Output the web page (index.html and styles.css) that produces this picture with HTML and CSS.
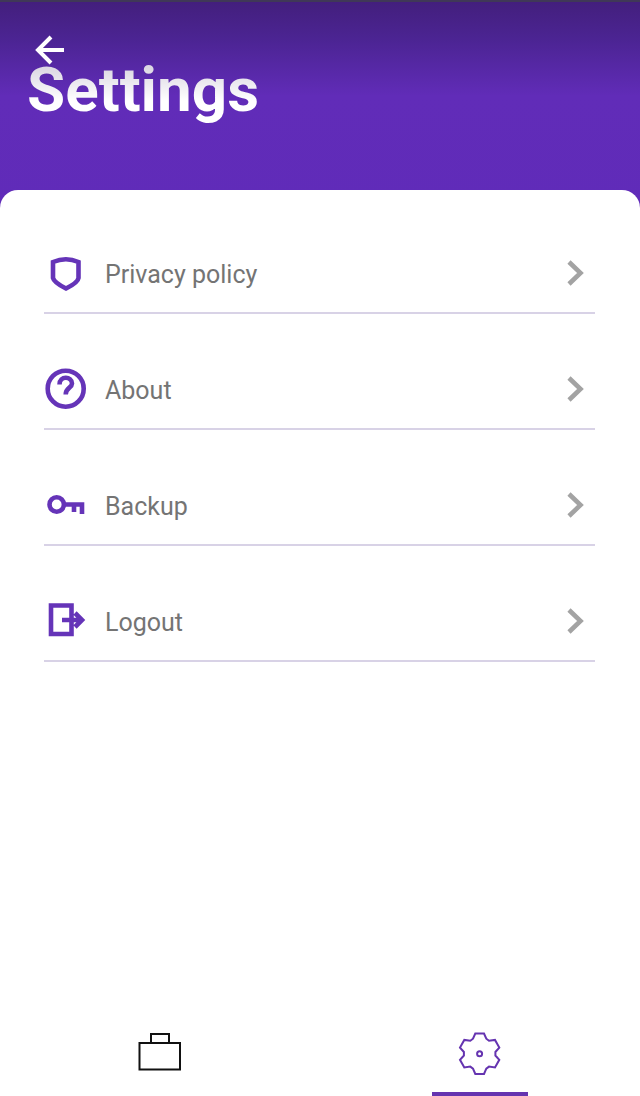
FILE: index.html
```html
<!DOCTYPE html>
<html lang="en">
<head>
<meta charset="utf-8">
<meta name="viewport" content="width=device-width, initial-scale=1">
<title>Settings</title>
<link rel="stylesheet" href="styles.css">
</head>
<body>
<header class="header">
  <button class="back" type="button" aria-label="Back">
    <svg class="back-icon" viewBox="0 0 32 32"><path d="M30 16H4M17 3L4 16l13 13"/></svg>
  </button>
  <h1 class="title">Settings</h1>
</header>
<main class="panel">
  <ul class="list">
    <li><a class="row" href="#privacy">
      <svg class="icon" viewBox="0 0 44 44"><path d="M9 11Q22 5.500 34.500 11V27Q34 31.500 22 37.500Q10 31.500 9 27Z"/></svg>
      <span class="label">Privacy policy</span>
      <svg class="chevron" viewBox="0 0 20 32"><path d="M3 5l11.500 11L3 27"/></svg>
    </a></li>
    <li><a class="row" href="#about">
      <svg class="icon" viewBox="0 0 44 44"><circle cx="21.700" cy="21.700" r="18"/><path d="M15.500 17.500C15.500 8.500 28 9 28 16.500C28 21 21.700 20.500 21.700 27.500"/></svg>
      <span class="label">About</span>
      <svg class="chevron" viewBox="0 0 20 32"><path d="M3 5l11.500 11L3 27"/></svg>
    </a></li>
    <li><a class="row" href="#backup">
      <svg class="icon" viewBox="0 0 44 44"><circle cx="12.700" cy="21.500" r="7.200"/><path d="M20 21.500H38V31M30 21.500V29"/></svg>
      <span class="label">Backup</span>
      <svg class="chevron" viewBox="0 0 20 32"><path d="M3 5l11.500 11L3 27"/></svg>
    </a></li>
    <li><a class="row" href="#logout">
      <svg class="icon" viewBox="0 0 44 44"><path d="M7 6.500H27.500V35H7ZM18 21H38M31 14l7 7l-7 7"/></svg>
      <span class="label">Logout</span>
      <svg class="chevron" viewBox="0 0 20 32"><path d="M3 5l11.500 11L3 27"/></svg>
    </a></li>
  </ul>
</main>
<nav class="tabs" aria-label="Main">
  <a class="tab" href="#work" aria-label="Work">
    <svg class="tab-icon" viewBox="0 0 48 48"><path d="M3.500 13H44V39.500H3.500ZM15 13V4H33V13"/></svg>
  </a>
  <a class="tab tab-active" href="#settings" aria-label="Settings" aria-current="page">
    <svg class="tab-icon" viewBox="0 0 48 48"><path d="M19.300 3.500H28L30.300 8.700L33 10.700L39 9.900L43.300 17.600L39.400 22V25.500L43.300 29.800L39 37.400L33 36.600L30.300 38.600L28 44H19.300L17 38.600L14.300 36.600L8.300 37.400L4 29.800L7.900 25.500V22L4 17.600L8.300 9.900L14.300 10.700L17 8.700Z"/><circle cx="23.600" cy="23.700" r="2.500"/></svg>
  </a>
</nav>
</body>
</html>
```
FILE: styles.css
```css
* {
  box-sizing: border-box;
}

body {
  display: flex;
  flex-direction: column;
  min-height: 100vh;
  margin: 0;
  background: #fff;
  font-family: Roboto, "Liberation Sans", sans-serif;
}

.header {
  position: relative;
  padding: 52px 27px 82px;
  border-top: 2px solid #403858;
  background: linear-gradient(#431f7d 0, #4b2492 36px, #612cb8 94px, #602bb9 100%);
}

.back {
  position: absolute;
  top: 32px;
  left: 34px;
  padding: 0;
  border: 0;
  background: none;
}

.back-icon {
  display: block;
  width: 32px;
  height: 32px;
  fill: none;
  stroke: #fff;
  stroke-width: 4;
}

.title {
  margin: 0;
  background: linear-gradient(#dcd8e3 20%, #fff 65%);
  background-clip: text;
  color: transparent;
  font-size: 62px;
  font-weight: 700;
  line-height: 72px;
}

.panel {
  position: relative;
  flex: 1;
  margin-top: -18px;
  padding: 61px 45px 32px 44px;
  border-radius: 18px 18px 0 0;
  background: #fff;
}

.list {
  display: grid;
  gap: 53px;
  margin: 0;
  padding: 0;
  list-style: none;
}

.row {
  display: flex;
  align-items: center;
  padding: 0 9px 17px 0;
  border-bottom: 2px solid #d8d2e6;
  color: #747474;
  font-size: 25px;
  line-height: 32px;
  text-decoration: none;
}

.icon {
  width: 44px;
  height: 44px;
  margin-right: 17px;
  fill: none;
  stroke: #6534b8;
  stroke-width: 4.6;
}

.label {
  flex: 1;
  padding-top: 4px;
}

.chevron {
  width: 20px;
  height: 32px;
  fill: none;
  stroke: #a3a3a3;
  stroke-width: 4.6;
}

.tabs {
  display: grid;
  grid-template-columns: 1fr 1fr;
}

.tab {
  display: flex;
  flex-direction: column;
  align-items: center;
  gap: 14px;
  color: #111;
}

.tab::after {
  width: 30%;
  height: 4px;
  content: "";
}

.tab-active {
  color: #6534b0;
}

.tab-active::after {
  background: #6534b0;
}

.tab-icon {
  width: 48px;
  height: 48px;
  fill: none;
  stroke: currentColor;
  stroke-width: 2;
}
```
